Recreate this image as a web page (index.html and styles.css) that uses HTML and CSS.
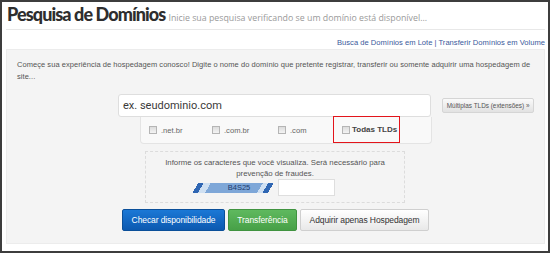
FILE: index.html
```html
<!DOCTYPE html>
<html lang="pt-BR">
<head>
    <meta charset="UTF-8">
    <title>Pesquisa de Domínios</title>
    <link rel="stylesheet" href="styles.css">
</head>
<body>
    <div class="frame">
        <div class="header">
            <h1>Pesquisa de Domínios</h1>
            <span class="subtitle">Inicie sua pesquisa verificando se um domínio está disponível...</span>
        </div>
        <div class="links">
            <a href="#">Busca de Domínios em Lote</a> | <a href="#">Transferir Domínios em Volume</a>
        </div>
        <div class="panel">
            <p class="intro">Começe sua experiência de hospedagem conosco! Digite o nome do domínio que pretente registrar, transferir ou somente adquirir uma hospedagem de site...</p>

            <div class="search-row">
                <input type="text" class="domain-input" placeholder="ex. seudominio.com">
                <button class="btn-small">Múltiplas TLDs (extensões) »</button>
            </div>

            <div class="tlds">
                <label class="tld tld-net"><span class="check"></span>.net.br</label>
                <label class="tld tld-combr"><span class="check"></span>.com.br</label>
                <label class="tld tld-com"><span class="check"></span>.com</label>
                <label class="tld tld-all"><span class="check"></span>Todas TLDs</label>
            </div>

            <div class="captcha">
                <p>Informe os caracteres que você visualiza. Será necessário para<br>prevenção de fraudes.</p>
                <div class="captcha-row">
                    <span class="captcha-img">B4S25</span>
                    <input type="text" class="captcha-input">
                </div>
            </div>

            <div class="actions">
                <button class="btn btn-blue">Checar disponibilidade</button>
                <button class="btn btn-green">Transferência</button>
                <button class="btn btn-white">Adquirir apenas Hospedagem</button>
            </div>
        </div>
    </div>
</body>
</html>
```

FILE: styles.css
```css
body {
    margin: 0;
    font-family: "Liberation Sans", Arial, sans-serif;
}

.frame {
    width: 550px;
    height: 253px;
    box-sizing: border-box;
    border: 2px solid #3d3d3d;
    background: #fff;
    padding: 0 3px 0 4px;
}

.header {
    display: flex;
    align-items: baseline;
    gap: 3px;
    height: 28px;
    box-sizing: border-box;
    border-bottom: 1px solid #e8e8e8;
    padding-left: 1px;
}

.header h1 {
    margin: 0;
    font-family: Lato, sans-serif;
    font-size: 18px;
    font-weight: 900;
    color: #2e2e2e;
    letter-spacing: -0.9px;
    line-height: 24px;
}

.subtitle {
    font-family: "Open Sans", sans-serif;
    font-size: 8.8px;
    color: #9a9a9a;
}

.links {
    text-align: right;
    font-size: 7.6px;
    line-height: 11px;
    color: #3a5a9c;
    padding-top: 7px;
    height: 19px;
    box-sizing: border-box;
}

.links a {
    color: #3a5a9c;
    text-decoration: none;
}

.panel {
    background: #f4f4f4;
    border: 1px solid #ececec;
    height: 195px;
    box-sizing: border-box;
    padding: 9px 10px 0;
}

.intro {
    margin: 0;
    font-size: 7.5px;
    line-height: 12px;
    color: #555;
    letter-spacing: 0.05px;
}

.search-row {
    display: flex;
    align-items: center;
    margin: 11px 0 0 101px;
}

.domain-input {
    width: 314px;
    height: 23px;
    box-sizing: border-box;
    border: 1px solid #dedede;
    border-radius: 3px;
    padding: 0 4px;
    font-family: Roboto, sans-serif;
    font-size: 11px;
    background: #fff;
}

.domain-input::placeholder {
    color: #3a3a3a;
}

.btn-small {
    margin-left: 11px;
    width: 92px;
    height: 15px;
    padding: 0;
    font-family: "Liberation Sans", Arial, sans-serif;
    font-size: 6.4px;
    color: #555;
    border: 1px solid #d5d5d5;
    border-radius: 2px;
    background: linear-gradient(#fafafa, #e2e2e2);
}

.tlds {
    display: flex;
    margin-left: 123px;
    width: 292px;
    height: 27px;
    box-sizing: border-box;
    background: #f9f9f9;
    border: 1px solid #e4e4e4;
    border-top: none;
    border-radius: 0 0 4px 4px;
    align-items: center;
    padding-left: 8px;
}

.tld {
    display: flex;
    align-items: center;
    gap: 4px;
    font-size: 7.6px;
    color: #666;
}

.tld-net {
    width: 63px;
}

.tld-combr {
    width: 66px;
}

.tld-com {
    width: 55px;
}

.check {
    width: 6px;
    height: 6px;
    border: 1px solid #b5b5b5;
    background: linear-gradient(#dcdcdc, #f4f4f4);
}

.tld-all {
    align-self: stretch;
    margin-top: -1px;
    width: 67px;
    box-sizing: border-box;
    border: 1px solid #e3141b;
    padding-left: 8px;
    gap: 2px;
    font-size: 8px;
    font-weight: bold;
    color: #444;
}

.captcha {
    margin: 7px 0 0 128px;
    width: 260px;
    height: 52px;
    box-sizing: border-box;
    border: 1px dashed #dcdcdc;
    text-align: center;
    padding-top: 5px;
}

.captcha p {
    margin: 0;
    font-size: 7.8px;
    line-height: 11px;
    color: #555;
}

.captcha-row {
    display: flex;
    align-items: center;
    padding-left: 45px;
    gap: 3px;
}

.captcha-img {
    width: 84px;
    height: 10px;
    font-size: 7.5px;
    line-height: 10px;
    color: #1d3b6e;
    text-indent: 12px;
    background: linear-gradient(120deg, #f4f4f4 0 8%, #2f66b3 8% 14%, #cfe0f2 14% 22%, #7ea7d8 22% 80%, #cfe0f2 80% 86%, #2f66b3 86% 92%, #f4f4f4 92%);
}

.captcha-input {
    width: 57px;
    height: 17px;
    box-sizing: border-box;
    border: 1px solid #dedede;
    background: #fff;
}

.actions {
    display: flex;
    gap: 3px;
    margin: 6px 0 0 105px;
}

.btn {
    height: 22px;
    padding: 0;
    font-family: "Liberation Sans", Arial, sans-serif;
    font-size: 8.5px;
    border-radius: 2px;
    letter-spacing: -0.1px;
}

.btn-blue {
    width: 103px;
    color: #fff;
    background: linear-gradient(#1b78d6, #0c59b0);
    border: 1px solid #0a4f99;
}

.btn-green {
    width: 69px;
    color: #fff;
    background: linear-gradient(#5fb95f, #47a047);
    border: 1px solid #409340;
}

.btn-white {
    width: 129px;
    color: #333;
    background: linear-gradient(#fff, #e8e8e8);
    border: 1px solid #cfcfcf;
}
```
